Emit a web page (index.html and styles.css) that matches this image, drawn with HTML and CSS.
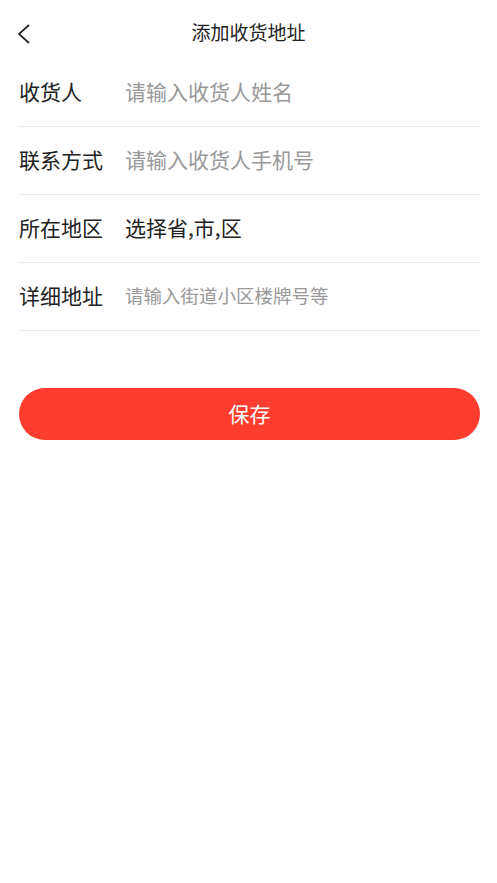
FILE: index.html
```html
<!doctype html>
<html>
<head>
<meta charset="utf-8">
<title>添加收货地址</title>
<link rel="stylesheet" href="styles.css">
</head>
<body>
<div class="header">
	<a class="back" href="javascript:;">
		<svg width="14" height="20" viewBox="0 0 14 20"><path d="M12 1 L2 10 L12 19" fill="none" stroke="#222" stroke-width="1.7"/></svg>
	</a>
	<h1>添加收货地址</h1>
</div>
<ul class="form">
	<li><span class="label">收货人</span><input type="text" placeholder="请输入收货人姓名"></li>
	<li><span class="label">联系方式</span><input type="text" placeholder="请输入收货人手机号"></li>
	<li><span class="label">所在地区</span><span class="pick">选择省,市,区</span></li>
	<li><span class="label">详细地址</span><input class="small" type="text" placeholder="请输入街道小区楼牌号等"></li>
</ul>
<div class="btn-wrap">
	<input type="button" class="save" value="保存">
</div>
</body>
</html>
```

FILE: styles.css
```css
*{ margin:0; padding:0; list-style:none; box-sizing:border-box;}
body{ background:#fff; font-family:"Noto Sans CJK SC","Noto Sans",sans-serif; color:#222;}
.header{ height:60px; padding-top:2px; display:flex; align-items:center; justify-content:center; position:relative;}
.header h1{ font-size:19px; font-weight:normal; color:#222;}
.back{ position:absolute; left:17px; top:24px; display:block; width:14px; height:20px;}
.form{ padding:0 17px 0 19px;}
.form li{ height:68px; padding-bottom:4px; display:flex; align-items:center; border-bottom:1px solid #e8e8e8;}
.form li:first-child{ height:67px;}
.label{ width:106px; font-size:21px; color:#222; flex-shrink:0;}
.form input{ flex:1; border:0; outline:0; font-family:inherit; font-size:21px; color:#222; background:none;}
.form input::placeholder{ color:#999;}
.form input.small{ font-size:18.5px;}
.pick{ font-size:21px; color:#222;}
.btn-wrap{ padding:57px 17px 0 19px;}
.save{ display:block; width:100%; height:52px; padding-bottom:3px; border:0; border-radius:26px; background:#ff3d2e; color:#fff; font-family:inherit; font-size:21px;}
```
